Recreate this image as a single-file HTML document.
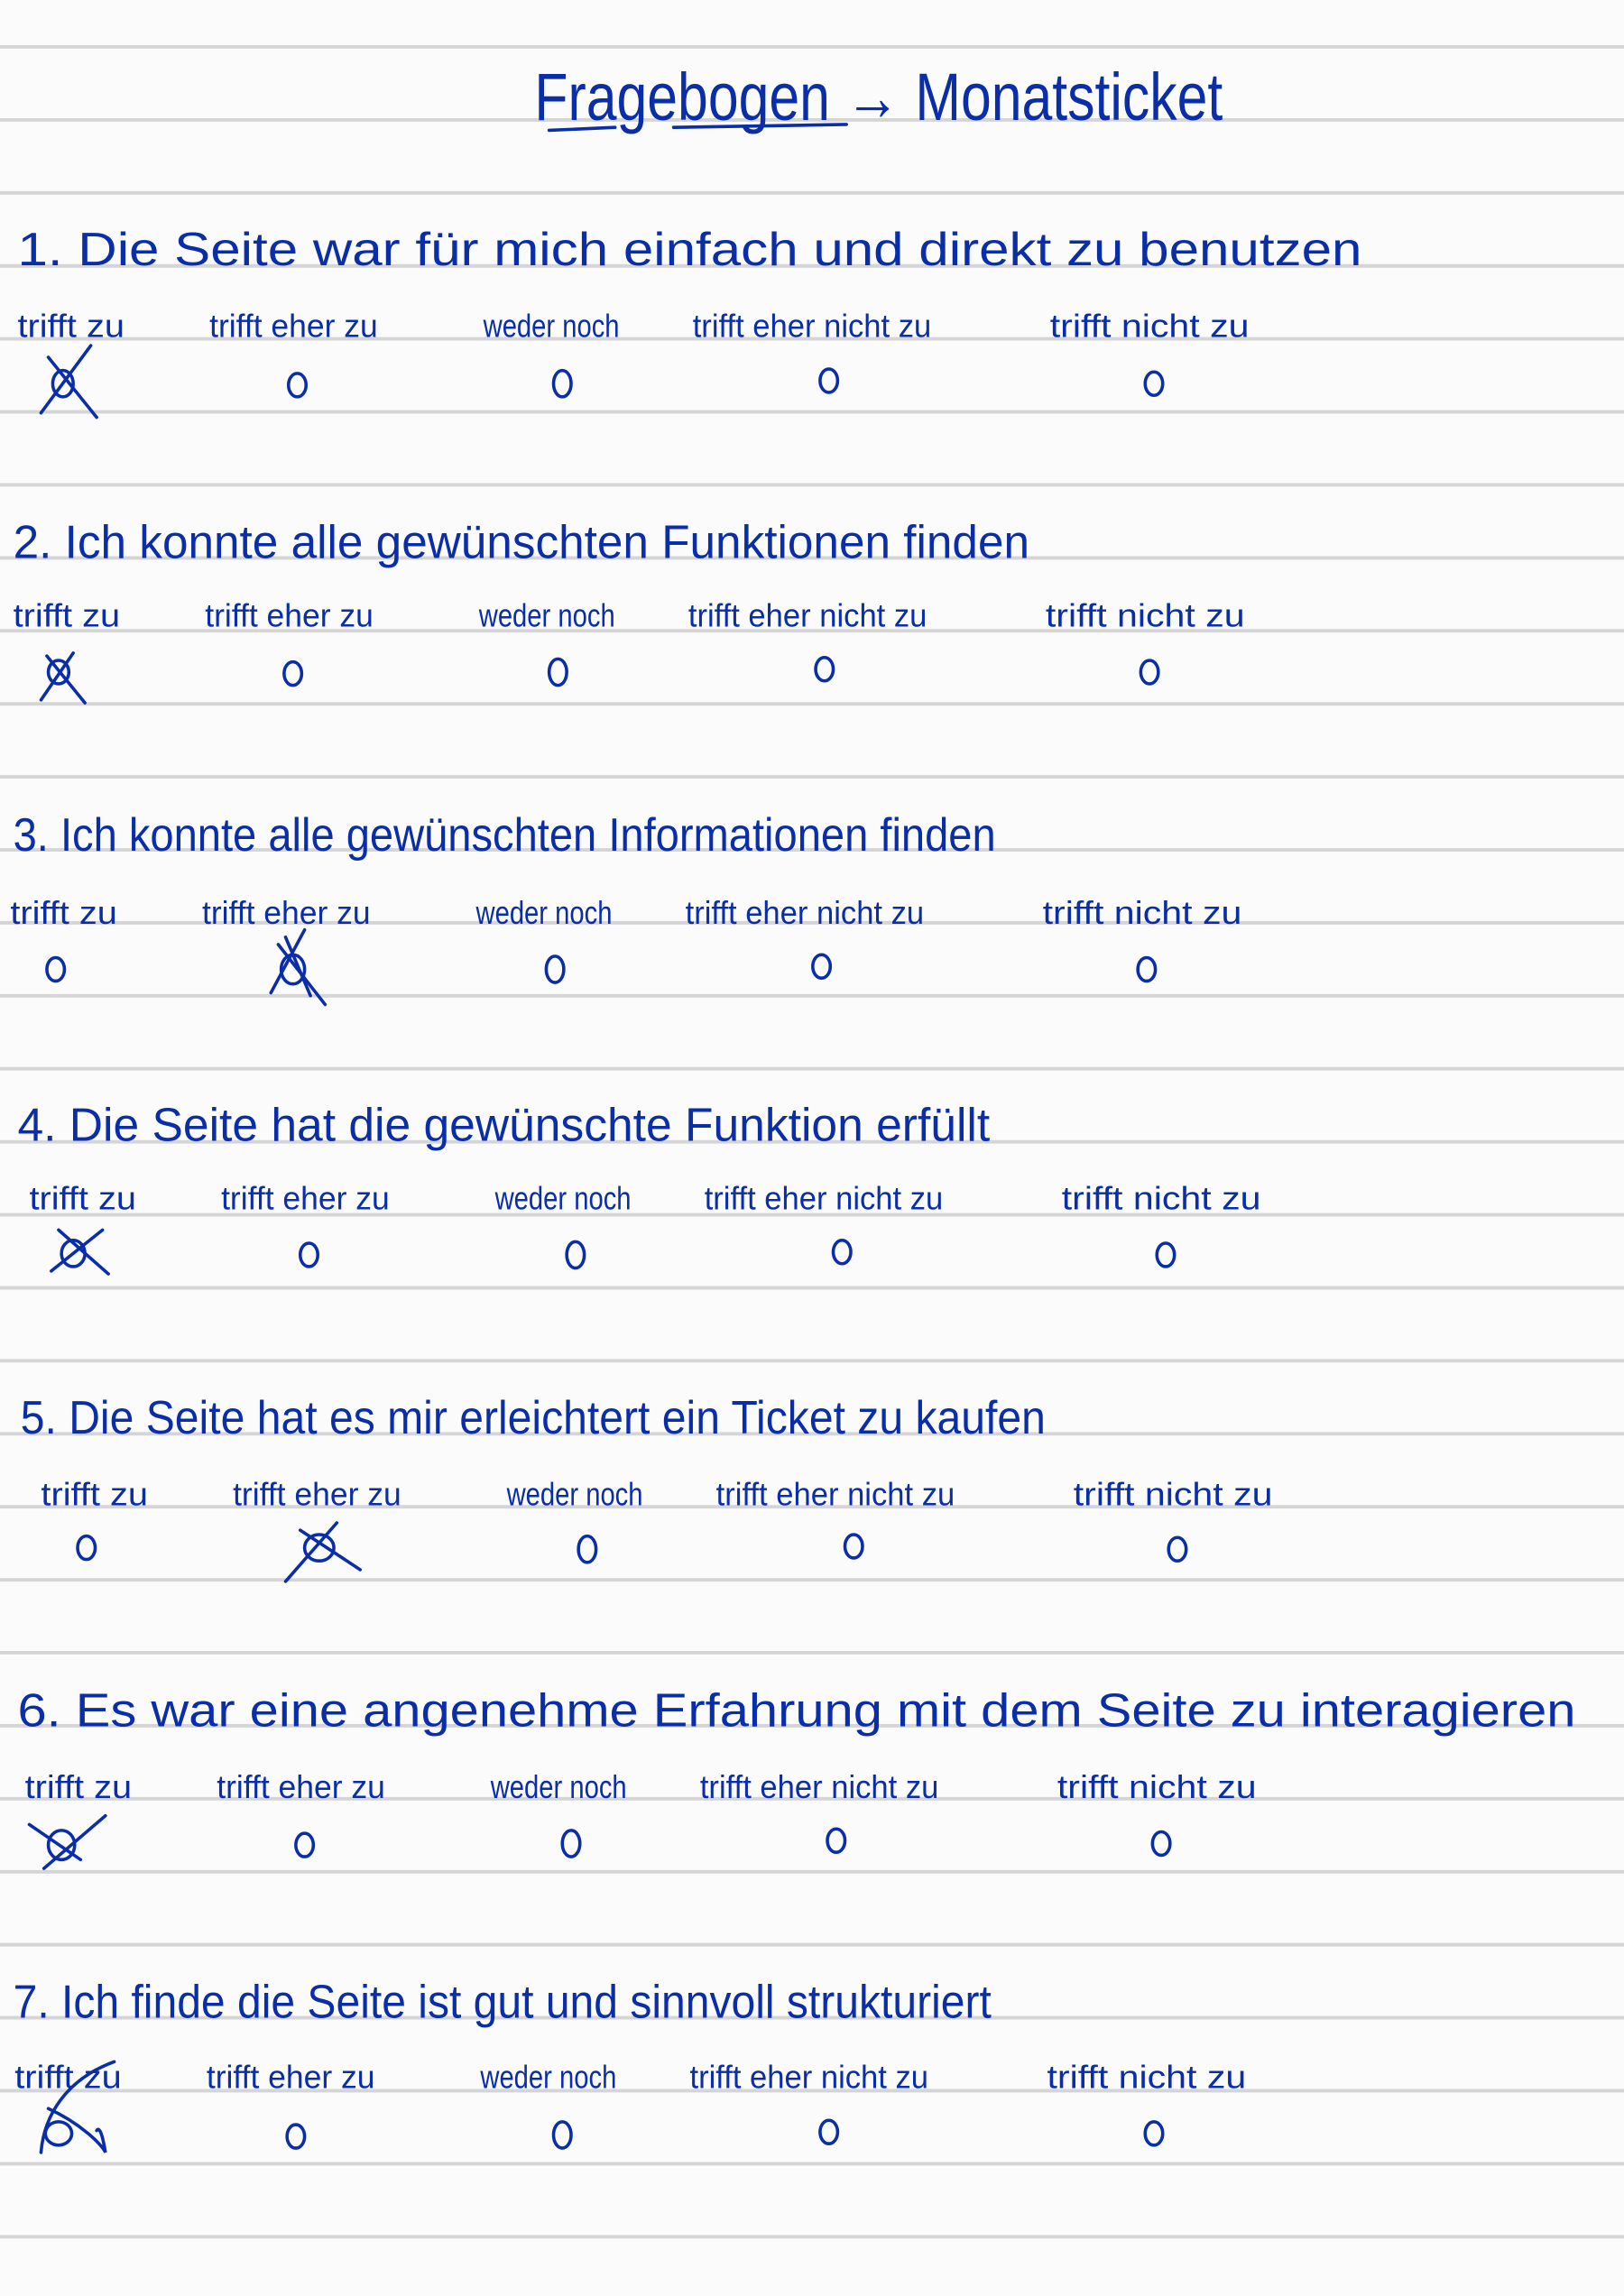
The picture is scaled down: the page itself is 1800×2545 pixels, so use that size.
<!DOCTYPE html>
<html><head><meta charset="utf-8"><style>
html,body{margin:0;padding:0;background:#fbfbfb}
svg{display:block}
text{font-family:"Liberation Sans","DejaVu Sans",sans-serif;fill:#0a2da8}
</style></head><body>
<svg width="1800" height="2545" viewBox="0 0 1109 1568" xmlns="http://www.w3.org/2000/svg">
<rect width="1109" height="1568" fill="#fbfbfb"/>
<g stroke="#d5d5d5" stroke-width="2.4">
<line x1="0" x2="1109" y1="32" y2="32"/><line x1="0" x2="1109" y1="81.9" y2="81.9"/><line x1="0" x2="1109" y1="131.7" y2="131.7"/><line x1="0" x2="1109" y1="181.6" y2="181.6"/><line x1="0" x2="1109" y1="231.4" y2="231.4"/><line x1="0" x2="1109" y1="281.3" y2="281.3"/><line x1="0" x2="1109" y1="331.1" y2="331.1"/><line x1="0" x2="1109" y1="381" y2="381"/><line x1="0" x2="1109" y1="430.8" y2="430.8"/><line x1="0" x2="1109" y1="480.7" y2="480.7"/><line x1="0" x2="1109" y1="530.5" y2="530.5"/><line x1="0" x2="1109" y1="580.4" y2="580.4"/><line x1="0" x2="1109" y1="630.2" y2="630.2"/><line x1="0" x2="1109" y1="680.1" y2="680.1"/><line x1="0" x2="1109" y1="729.9" y2="729.9"/><line x1="0" x2="1109" y1="779.8" y2="779.8"/><line x1="0" x2="1109" y1="829.6" y2="829.6"/><line x1="0" x2="1109" y1="879.5" y2="879.5"/><line x1="0" x2="1109" y1="929.3" y2="929.3"/><line x1="0" x2="1109" y1="979.2" y2="979.2"/><line x1="0" x2="1109" y1="1029" y2="1029"/><line x1="0" x2="1109" y1="1078.9" y2="1078.9"/><line x1="0" x2="1109" y1="1128.7" y2="1128.7"/><line x1="0" x2="1109" y1="1178.6" y2="1178.6"/><line x1="0" x2="1109" y1="1228.4" y2="1228.4"/><line x1="0" x2="1109" y1="1278.3" y2="1278.3"/><line x1="0" x2="1109" y1="1328.1" y2="1328.1"/><line x1="0" x2="1109" y1="1378" y2="1378"/><line x1="0" x2="1109" y1="1427.8" y2="1427.8"/><line x1="0" x2="1109" y1="1477.7" y2="1477.7"/><line x1="0" x2="1109" y1="1527.5" y2="1527.5"/>
</g>
<text x="365" y="82" font-size="46" textLength="470" lengthAdjust="spacingAndGlyphs">Fragebogen → Monatsticket</text>
<g stroke="#0a2da8" stroke-width="2.2" stroke-linecap="round"><line x1="375" y1="89" x2="420" y2="87"/><line x1="460" y1="87" x2="578" y2="85"/></g>

<g font-size="32">
<text x="12" y="181" textLength="918" lengthAdjust="spacingAndGlyphs">1. Die Seite war für mich einfach und direkt zu benutzen</text>
<text x="9" y="381" textLength="694" lengthAdjust="spacingAndGlyphs">2. Ich konnte alle gewünschten Funktionen finden</text>
<text x="9" y="581" textLength="671" lengthAdjust="spacingAndGlyphs">3. Ich konnte alle gewünschten Informationen finden</text>
<text x="12" y="779" textLength="664" lengthAdjust="spacingAndGlyphs">4. Die Seite hat die gewünschte Funktion erfüllt</text>
<text x="14" y="979" textLength="700" lengthAdjust="spacingAndGlyphs">5. Die Seite hat es mir erleichtert ein Ticket zu kaufen</text>
<text x="12" y="1179" textLength="1064" lengthAdjust="spacingAndGlyphs">6. Es war eine angenehme Erfahrung mit dem Seite zu interagieren</text>
<text x="9" y="1378" textLength="668" lengthAdjust="spacingAndGlyphs">7. Ich finde die Seite ist gut und sinnvoll strukturiert</text>
</g>

<g font-size="22">
<g transform="translate(0,230)"><text x="12" textLength="73" lengthAdjust="spacingAndGlyphs">trifft zu</text><text x="143" textLength="115" lengthAdjust="spacingAndGlyphs">trifft eher zu</text><text x="330" textLength="93" lengthAdjust="spacingAndGlyphs">weder noch</text><text x="473" textLength="163" lengthAdjust="spacingAndGlyphs">trifft eher nicht zu</text><text x="717" textLength="136" lengthAdjust="spacingAndGlyphs">trifft nicht zu</text></g>
<g transform="translate(-3,428)"><text x="12" textLength="73" lengthAdjust="spacingAndGlyphs">trifft zu</text><text x="143" textLength="115" lengthAdjust="spacingAndGlyphs">trifft eher zu</text><text x="330" textLength="93" lengthAdjust="spacingAndGlyphs">weder noch</text><text x="473" textLength="163" lengthAdjust="spacingAndGlyphs">trifft eher nicht zu</text><text x="717" textLength="136" lengthAdjust="spacingAndGlyphs">trifft nicht zu</text></g>
<g transform="translate(-5,631)"><text x="12" textLength="73" lengthAdjust="spacingAndGlyphs">trifft zu</text><text x="143" textLength="115" lengthAdjust="spacingAndGlyphs">trifft eher zu</text><text x="330" textLength="93" lengthAdjust="spacingAndGlyphs">weder noch</text><text x="473" textLength="163" lengthAdjust="spacingAndGlyphs">trifft eher nicht zu</text><text x="717" textLength="136" lengthAdjust="spacingAndGlyphs">trifft nicht zu</text></g>
<g transform="translate(8,826)"><text x="12" textLength="73" lengthAdjust="spacingAndGlyphs">trifft zu</text><text x="143" textLength="115" lengthAdjust="spacingAndGlyphs">trifft eher zu</text><text x="330" textLength="93" lengthAdjust="spacingAndGlyphs">weder noch</text><text x="473" textLength="163" lengthAdjust="spacingAndGlyphs">trifft eher nicht zu</text><text x="717" textLength="136" lengthAdjust="spacingAndGlyphs">trifft nicht zu</text></g>
<g transform="translate(16,1028)"><text x="12" textLength="73" lengthAdjust="spacingAndGlyphs">trifft zu</text><text x="143" textLength="115" lengthAdjust="spacingAndGlyphs">trifft eher zu</text><text x="330" textLength="93" lengthAdjust="spacingAndGlyphs">weder noch</text><text x="473" textLength="163" lengthAdjust="spacingAndGlyphs">trifft eher nicht zu</text><text x="717" textLength="136" lengthAdjust="spacingAndGlyphs">trifft nicht zu</text></g>
<g transform="translate(5,1228)"><text x="12" textLength="73" lengthAdjust="spacingAndGlyphs">trifft zu</text><text x="143" textLength="115" lengthAdjust="spacingAndGlyphs">trifft eher zu</text><text x="330" textLength="93" lengthAdjust="spacingAndGlyphs">weder noch</text><text x="473" textLength="163" lengthAdjust="spacingAndGlyphs">trifft eher nicht zu</text><text x="717" textLength="136" lengthAdjust="spacingAndGlyphs">trifft nicht zu</text></g>
<g transform="translate(-2,1426)"><text x="12" textLength="73" lengthAdjust="spacingAndGlyphs">trifft zu</text><text x="143" textLength="115" lengthAdjust="spacingAndGlyphs">trifft eher zu</text><text x="330" textLength="93" lengthAdjust="spacingAndGlyphs">weder noch</text><text x="473" textLength="163" lengthAdjust="spacingAndGlyphs">trifft eher nicht zu</text><text x="717" textLength="136" lengthAdjust="spacingAndGlyphs">trifft nicht zu</text></g>
</g>

<g fill="none" stroke="#0a2da8" stroke-width="2.2" stroke-linecap="round">
<ellipse cx="43" cy="262" rx="7" ry="9"/><line x1="28" y1="282" x2="62" y2="236"/><line x1="33" y1="244" x2="66" y2="285"/>
<ellipse cx="203" cy="263" rx="6" ry="8"/><ellipse cx="384" cy="262" rx="6" ry="9"/><ellipse cx="566" cy="260" rx="6" ry="8"/><ellipse cx="788" cy="262" rx="6" ry="8"/>
<ellipse cx="40" cy="459" rx="7" ry="8"/><line x1="28" y1="478" x2="50" y2="446"/><line x1="32" y1="448" x2="58" y2="480"/>
<ellipse cx="200" cy="460" rx="6" ry="8"/><ellipse cx="381" cy="459" rx="6" ry="9"/><ellipse cx="563" cy="457" rx="6" ry="8"/><ellipse cx="785" cy="459" rx="6" ry="8"/>
<ellipse cx="38" cy="662" rx="6" ry="8"/>
<ellipse cx="200" cy="662" rx="8" ry="10"/><line x1="185" y1="678" x2="208" y2="635"/><line x1="190" y1="645" x2="222" y2="686"/><line x1="195" y1="640" x2="212" y2="680"/>
<ellipse cx="379" cy="662" rx="6" ry="9"/><ellipse cx="561" cy="660" rx="6" ry="8"/><ellipse cx="783" cy="662" rx="6" ry="8"/>
<ellipse cx="50" cy="856" rx="8" ry="9"/><line x1="35" y1="868" x2="70" y2="840"/><line x1="40" y1="840" x2="74" y2="870"/>
<ellipse cx="211" cy="857" rx="6" ry="8"/><ellipse cx="393" cy="857" rx="6" ry="9"/><ellipse cx="575" cy="855" rx="6" ry="8"/><ellipse cx="796" cy="857" rx="6" ry="8"/>
<ellipse cx="59" cy="1057" rx="6" ry="8"/>
<ellipse cx="218" cy="1057" rx="10" ry="9"/><line x1="195" y1="1080" x2="230" y2="1040"/><line x1="205" y1="1045" x2="246" y2="1072"/>
<ellipse cx="401" cy="1058" rx="6" ry="9"/><ellipse cx="583" cy="1056" rx="6" ry="8"/><ellipse cx="804" cy="1058" rx="6" ry="8"/>
<ellipse cx="42" cy="1260" rx="9" ry="10"/><line x1="30" y1="1276" x2="72" y2="1240"/><line x1="20" y1="1246" x2="55" y2="1270"/>
<ellipse cx="208" cy="1260" rx="6" ry="8"/><ellipse cx="390" cy="1259" rx="6" ry="9"/><ellipse cx="571" cy="1257" rx="6" ry="8"/><ellipse cx="793" cy="1259" rx="6" ry="8"/>
<path d="M28 1470 C30 1445 45 1420 78 1408"/><path d="M33 1440 C55 1450 70 1465 72 1470 C70 1458 68 1452 66 1455"/><ellipse cx="40" cy="1457" rx="9" ry="8"/>
<ellipse cx="202" cy="1459" rx="6" ry="8"/><ellipse cx="384" cy="1458" rx="6" ry="9"/><ellipse cx="566" cy="1456" rx="6" ry="8"/><ellipse cx="788" cy="1457" rx="6" ry="8"/>
</g>
</svg>
</body></html>
